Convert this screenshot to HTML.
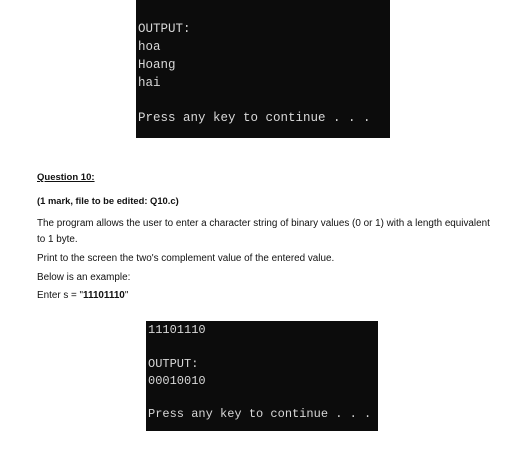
<!DOCTYPE html>
<html><head><style>
body{margin:0;width:526px;height:455px;background:#fff;position:relative;overflow:hidden;font-family:"Liberation Sans",sans-serif;color:#111}
.t{position:absolute;background:#0c0c0c;color:#d8d8d8;font-family:"Liberation Mono",monospace;white-space:pre}
.t div{position:absolute;left:2px}
.p{position:absolute;left:37px;font-size:9.9px;white-space:nowrap}
</style></head><body>
<div class="t" style="left:136px;top:0;width:254px;height:138px;font-size:12.5px">
<div style="top:22px">OUTPUT:</div>
<div style="top:40px">hoa</div>
<div style="top:58px">Hoang</div>
<div style="top:76px">hai</div>
<div style="top:111px">Press any key to continue . . .</div>
</div>
<div class="p" style="top:172px;font-weight:bold;text-decoration:underline;font-size:9.5px">Question 10:</div>
<div class="p" style="top:195px;font-weight:bold;font-size:9.4px">(1 mark, file to be edited: Q10.c)</div>
<div class="p" style="top:218px">The program allows the user to enter a character string of binary values (0 or 1) with a length equivalent</div>
<div class="p" style="top:234px">to 1 byte.</div>
<div class="p" style="top:253px">Print to the screen the two's complement value of the entered value.</div>
<div class="p" style="top:272px">Below is an example:</div>
<div class="p" style="top:290px">Enter s = "<b>11101110</b>"</div>
<div class="t" style="left:146px;top:321px;width:232px;height:110px;font-size:12px">
<div style="top:2px">11101110</div>
<div style="top:36px">OUTPUT:</div>
<div style="top:53px">00010010</div>
<div style="top:86px">Press any key to continue . . .</div>
</div>
</body></html>
